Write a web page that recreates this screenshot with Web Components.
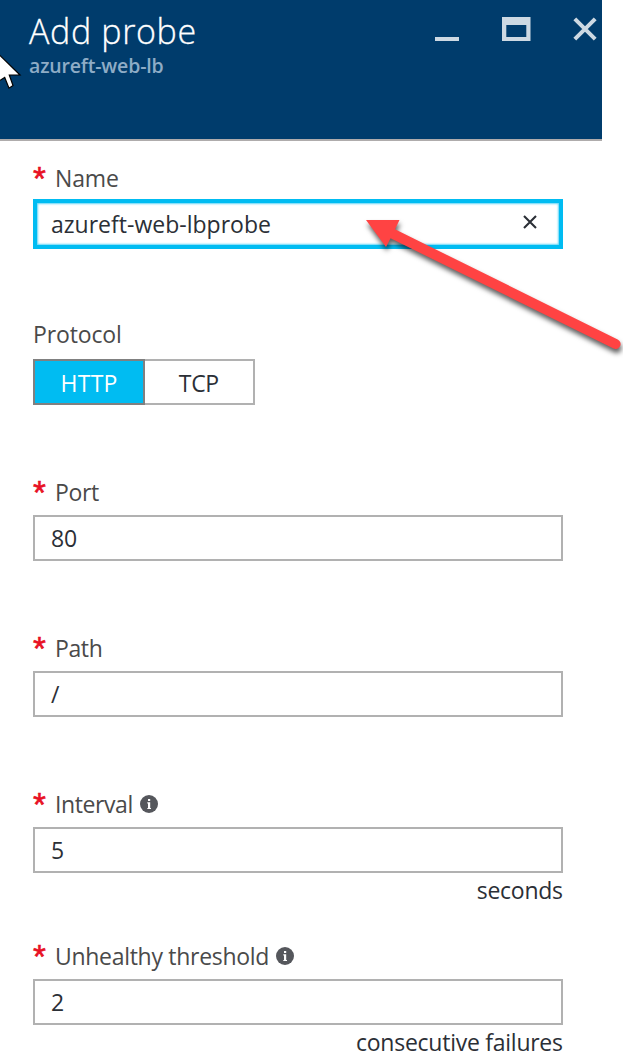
<!DOCTYPE html>
<html lang="en">
<head>
<meta charset="utf-8">
<title>Add probe</title>
<style>
html,body{margin:0;background:#fff}
body{width:623px;height:1063px;overflow:hidden;position:relative;font:23px/30px "Open Sans","Noto Sans",sans-serif;color:#2b2f36}
</style>
</head>
<body>
<probe-blade>
  <blade-header slot="header">
    <fit-text slot="title" ink="165.5">Add probe</fit-text>
    <fit-text slot="subtitle" ink="134.5">azureft-web-lb</fit-text>
  </blade-header>
  <form-field required style="--gap:6px;--after:70px">
    <fit-text slot="label" ink="61">Name</fit-text>
    <text-box focused><fit-text ink="218">azureft-web-lbprobe</fit-text></text-box>
  </form-field>
  <form-field style="--gap:10px;--after:72px">
    <fit-text slot="label" ink="85">Protocol</fit-text>
    <option-picker>
      <fit-text slot="on" ink="54">HTTP</fit-text>
      <fit-text slot="off" ink="39.5">TCP</fit-text>
    </option-picker>
  </form-field>
  <form-field required style="--after:72px">
    <fit-text slot="label" ink="42">Port</fit-text>
    <text-box><fit-text ink="24">80</fit-text></text-box>
  </form-field>
  <form-field required style="--after:72px">
    <fit-text slot="label" ink="44.7">Path</fit-text>
    <text-box><fit-text>/</fit-text></text-box>
  </form-field>
  <form-field required style="--after:36px">
    <fit-text slot="label" ink="74.5">Interval</fit-text>
    <info-dot slot="info"></info-dot>
    <text-box><fit-text>5</fit-text></text-box>
    <fit-text slot="unit" ink="84.3">seconds</fit-text>
  </form-field>
  <form-field required>
    <fit-text slot="label" ink="211.3">Unhealthy threshold</fit-text>
    <info-dot slot="info"></info-dot>
    <text-box><fit-text>2</fit-text></text-box>
    <fit-text slot="unit" ink="205">consecutive failures</fit-text>
  </form-field>
</probe-blade>
<callout-arrow></callout-arrow>
<mouse-pointer></mouse-pointer>
<script>
const define = (name, html, setup) => customElements.define(name, class extends HTMLElement {
  connectedCallback() {
    if (this.shadowRoot) return;
    this.attachShadow({mode: 'open'}).innerHTML = html;
    if (setup) setup(this);
  }
});

define('probe-blade', `<style>
:host{display:block;width:602px}
main{display:flex;flex-direction:column;padding:22px 39px 0 33px}
</style><slot name="header"></slot><main><slot></slot></main>`);

define('blade-header', `<style>
:host{display:flex;justify-content:space-between;box-sizing:border-box;height:141px;background:#003c6c;border-bottom:2px solid #afacac;padding:8px 4px 0 29px}
.t{font-size:34px;font-weight:340;line-height:46px;color:#fff;-webkit-text-stroke:.3px #fff}
.s{font-size:19.5px;font-weight:600;line-height:24px;color:#8eacc6}
svg{display:block;margin-top:8px}
</style>
<div><div class="t"><slot name="title"></slot></div><div class="s"><slot name="subtitle"></slot></div></div>
<svg width="164" height="26" viewBox="434 16 164 26">
<path fill="#cdd9e3" d="M435 37h24v4h-24zM502 17h28.5v24H502zM506.3 25v12h20V25z" fill-rule="evenodd"/>
<path d="M574.8 18.8l20.4 20.4M595.2 18.8l-20.4 20.4" stroke="#cdd9e3" stroke-width="4"/>
</svg>`);

define('form-field', `<style>
:host{display:block;margin-bottom:var(--after,0)}
.l{display:flex;height:30px;margin-bottom:var(--gap,8px);color:#4a4a4a}
.r{display:none;width:22px;color:#e81123;font:33px/31px "Liberation Sans",sans-serif;-webkit-text-stroke:.6px #e81123}
:host([required]) .r{display:block}
.u{display:flex;justify-content:flex-end}
::slotted([slot=unit]){margin-top:2px}
</style>
<div class="l"><span class="r">*</span><slot name="label"></slot><slot name="info"></slot></div>
<slot></slot><div class="u"><slot name="unit"></slot></div>`);

define('text-box', `<style>
:host{display:flex;align-items:center;justify-content:space-between;box-sizing:border-box;height:46px;border:2px solid #b1b1b1;padding:0 24px 0 16px}
:host([focused]){height:50px;border:4px solid #00bcf2;padding:0 20.500px 0 14px;box-shadow:inset 0 0 2px 1px #00bcf2a0}
svg{display:none}
:host([focused]) svg{display:block;margin-top:-4px}
</style><slot></slot>
<svg width="18" height="16" viewBox="0 0 18 16"><path d="M3 2l12 12M15 2L3 14" stroke="#2b2f36" stroke-width="2.1"/></svg>`);

define('option-picker', `<style>
:host{display:flex;height:46px;width:222px}
div{box-sizing:border-box;display:flex;align-items:center;justify-content:center;border:2px solid #b1b1b1;padding-top:1px}
.on{width:112px;background:#00bcf2;border-color:#808080;color:#fff}
.off{width:110px;border-left:0}
</style><div class="on"><slot name="on"></slot></div><div class="off"><slot name="off"></slot></div>`);

define('info-dot', `<style>:host{display:block;margin:6px 0 0 6.6px}svg{display:block}</style>
<svg width="18" height="18" viewBox="0 0 18 18"><circle cx="9" cy="9" r="9" fill="#55575c"/><path fill="#fff" d="M8 4h2.200v2H8zM7.300 7.300h2.900v5.700h.8v1H7.300v-1H8V8.400h-.7z"/></svg>`);

/* Spaces its letters so that the drawn text spans the "ink" width. */
define('fit-text', `<style>:host{display:block;white-space:nowrap;width:max-content}</style><slot></slot>`, el => {
  const target = parseFloat(el.getAttribute('ink'));
  if (!target) return;
  requestAnimationFrame(() => {
    const s = getComputedStyle(el), c = document.createElement('canvas').getContext('2d');
    c.font = `${s.fontWeight} ${s.fontSize} ${s.fontFamily}`;
    const m = c.measureText(el.textContent);
    const ink = m.actualBoundingBoxLeft + m.actualBoundingBoxRight;
    const gap = (target - ink) / (el.textContent.length - 1);
    el.style.letterSpacing = gap + 'px';
    el.style.marginRight = -gap + 'px';
  });
});

define('callout-arrow', `<style>:host{position:absolute;left:350px;top:200px;pointer-events:none}svg{display:block;filter:drop-shadow(1px 4px 2.5px #000000a0)}</style>
<svg width="273" height="170" viewBox="350 200 273 170"><path fill="#ff4343" d="M366 220H399.500L395 229.300L617.700 339.400A5 5 0 0 1 613.500 348.500L390.500 238.300L386 247z"/></svg>`);

define('mouse-pointer', `<style>:host{position:absolute;left:0;top:50px}svg{display:block}</style>
<svg width="24" height="42" viewBox="0 50 24 42"><path fill="#fff" stroke="#000" stroke-width="1.2" d="M-1 54.500L20 75H9.300L13 85.500L9 88.200L4.700 77.500L-1 81z"/></svg>`);
</script>
</body>
</html>
